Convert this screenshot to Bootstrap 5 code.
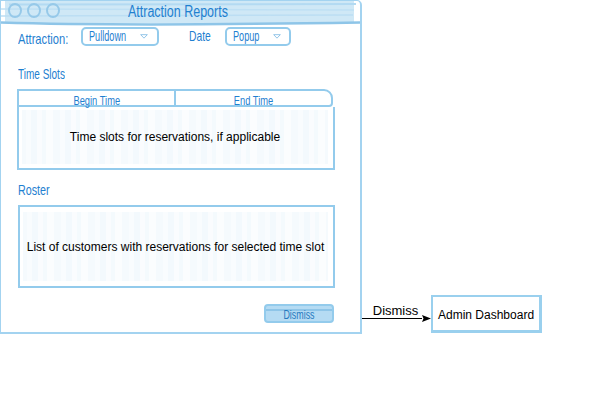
<!DOCTYPE html>
<html lang="en">
<head>
<meta charset="utf-8">
<title>Attraction Reports</title>
<link href="https://cdn.jsdelivr.net/npm/bootstrap@5.3.0/dist/css/bootstrap.min.css" rel="stylesheet">
<style>
html,body{margin:0;background:#fff;}
body{width:612px;height:406px;overflow:hidden;font-family:"Liberation Sans",Arial,sans-serif;font-size:12px;color:#000;}
.stage{align-items:flex-end;height:334px;}
.sk{font-family:"Liberation Sans",sans-serif;color:#1f80d0;line-height:1;}
.sq{display:inline-block;white-space:nowrap;transform-origin:left center;}
.sq-c{transform-origin:center center;}
.sq-63{transform:scaleX(.63);}
.sq-69{transform:scaleX(.69);}
.sq-71{transform:scaleX(.71);}
.sq-74{transform:scaleX(.74);}
.sq-77{transform:scaleX(.77);}
.sq-78{transform:scaleX(.78);}
.win{width:362px;height:334px;border:solid #a3d3f0;border-width:1px 2px 2px 1px;border-top-right-radius:5px;}
.titlebar{height:22px;background:#cfe8f6;position:relative;margin-left:4px;margin-right:6px;padding-left:3px;}
.titlebar-line{position:absolute;left:-4px;top:0;width:359px;height:25px;}
.ttl{position:absolute;left:123px;top:3px;font-size:16px;}
.dots{position:relative;gap:5px;padding-top:2px;}
.dot{width:14px;height:15px;border:2px solid #96c9e9;border-radius:50%;}
.filters{padding:4px 0 0 17px;height:45px;}
.lbl{font-size:14.5px;}
.lbl-a{width:63px;padding-top:5px;}
.lbl-b{width:36px;padding-top:2px;}
.pick{height:19px;border:2px solid #93cbec;border-radius:5px;font-size:14.5px;padding-left:6px;justify-content:space-between;}
.pick-a{width:78px;margin-right:30px;padding-right:8px;}
.pick-b{width:66px;padding-right:8px;}
.caret{width:8px;height:5px;flex:none;}
.pick-a .caret{margin-right:1px;}
.pick-b .caret{margin-right:0;}
.grow{flex:1 1 0;min-width:0;overflow:visible;}
.sect{font-size:14.5px;padding-left:17px;}
.sect-a{height:21px;margin-top:-1px;margin-bottom:1px;}
.thead{margin:0 27px 0 16px;height:18px;border:2px solid #93cbec;border-top-right-radius:9px;border-bottom-right-radius:4px;font-size:13.5px;}
.thead>div{flex:1 1 0;text-align:center;padding-top:3px;}
.thead>div:first-child{border-right:2px solid #93cbec;}
.hatch{display:flex;align-items:center;justify-content:center;margin-left:17px;width:317px;
  border:solid #93cbec;background-color:#fff;background-image:repeating-linear-gradient(90deg,#f5fafd 0 7px,#f9fcfe 7px 12px,#f3f9fd 12px 18px,#fafcfe 18px 23px,#f4fafd 23px 27px,#fbfdfe 27px 34px);background-clip:content-box;}
.hatch-a{height:63px;border-width:0 2px 2px 2px;margin-left:16px;width:318px;padding:3px 5px 4px 3px;}
.hatch-b{height:83px;border-width:2px;padding:5px 5px 5px 3px;margin-left:17px;}
.sect-b{margin-top:13px;margin-bottom:8px;height:14px;}
.foot{padding-right:26px;margin-top:16px;}
.dismiss{width:70px;height:19px;border:2px solid #93cbec;border-radius:4px;background:linear-gradient(#b5dbf3 0 3px,#8ec5e8 3px 5px,#b5dbf3 5px 100%);font-size:12px;color:#2479bf;padding-top:3px;text-align:center;}
.link{width:69px;margin-bottom:11px;}
.link-txt{height:12px;text-align:center;font-size:13px;line-height:12px;margin:0 5px -3px 3px;}
.arrow{width:69px;height:9px;}
.node{width:111px;height:38px;margin-bottom:1px;border:solid #9ad0ee;border-width:2px 3px 3px 2px;padding:2px 0 0 5px;}
</style>
</head>
<body>
<div class="d-flex stage">
  <div class="win flex-shrink-0">
    <div class="titlebar">
      <svg class="titlebar-line" viewBox="0 0 359 25" aria-hidden="true">
        <path d="M8 3.5L355 3" stroke="#b3daf2" stroke-width="2" fill="none"/>
        <path d="M0 8L353 9" stroke="#bfe0f4" stroke-width="1.5" fill="none"/>
        <path d="M0 15L352 14" stroke="#bcdef3" stroke-width="1.5" fill="none"/>
        <path d="M0 21.5C80 24 200 24 359 21.5" stroke="#8ec5e8" stroke-width="2.5" fill="none"/>
      </svg>
      <div class="d-flex dots">
        <div class="dot"></div><div class="dot"></div><div class="dot"></div>
      </div>
      <div class="ttl sk"><span class="sq sq-78">Attraction Reports</span></div>
    </div>
    <div class="d-flex align-items-start filters sk">
      <div class="lbl lbl-a"><span class="sq sq-77">Attraction:</span></div>
      <div class="pick pick-a d-flex align-items-center sk"><span class="grow"><span class="sq sq-63">Pulldown</span></span>
        <svg class="caret" viewBox="0 0 9 6" aria-hidden="true"><path d="M.5 .8H8.5L4.5 5Z" fill="none" stroke="#7fbbe3"/></svg></div>
      <div class="lbl lbl-b"><span class="sq sq-71">Date</span></div>
      <div class="pick pick-b d-flex align-items-center sk"><span class="grow"><span class="sq sq-63">Popup</span></span>
        <svg class="caret" viewBox="0 0 9 6" aria-hidden="true"><path d="M.5 .8H8.5L4.5 5Z" fill="none" stroke="#7fbbe3"/></svg></div>
    </div>
    <div class="sect sect-a sk"><span class="sq sq-69">Time Slots</span></div>
    <div class="thead d-flex sk"><div><span class="sq sq-c sq-69">Begin Time</span></div><div><span class="sq sq-c sq-69">End Time</span></div></div>
    <div class="hatch hatch-a">Time slots for reservations, if applicable</div>
    <div class="sect sect-b sk d-flex align-items-center"><span class="sq sq-74">Roster</span></div>
    <div class="hatch hatch-b">List of customers with reservations for selected time slot</div>
    <div class="foot d-flex justify-content-end"><div class="dismiss sk"><span class="sq sq-c sq-74">Dismiss</span></div></div>
  </div>
  <div class="link flex-shrink-0 d-flex flex-column">
    <div class="link-txt">Dismiss</div>
    <svg class="arrow" viewBox="0 0 69 9" aria-hidden="true"><path d="M0 4.5H60" stroke="#000" stroke-width="1"/><path d="M60 1L69 4.5L60 8L61.5 4.5Z" fill="#000"/></svg>
  </div>
  <div class="node flex-shrink-0 d-flex align-items-center">Admin Dashboard</div>
</div>
<script src="https://cdn.jsdelivr.net/npm/bootstrap@5.3.0/dist/js/bootstrap.bundle.min.js"></script>
</body>
</html>
